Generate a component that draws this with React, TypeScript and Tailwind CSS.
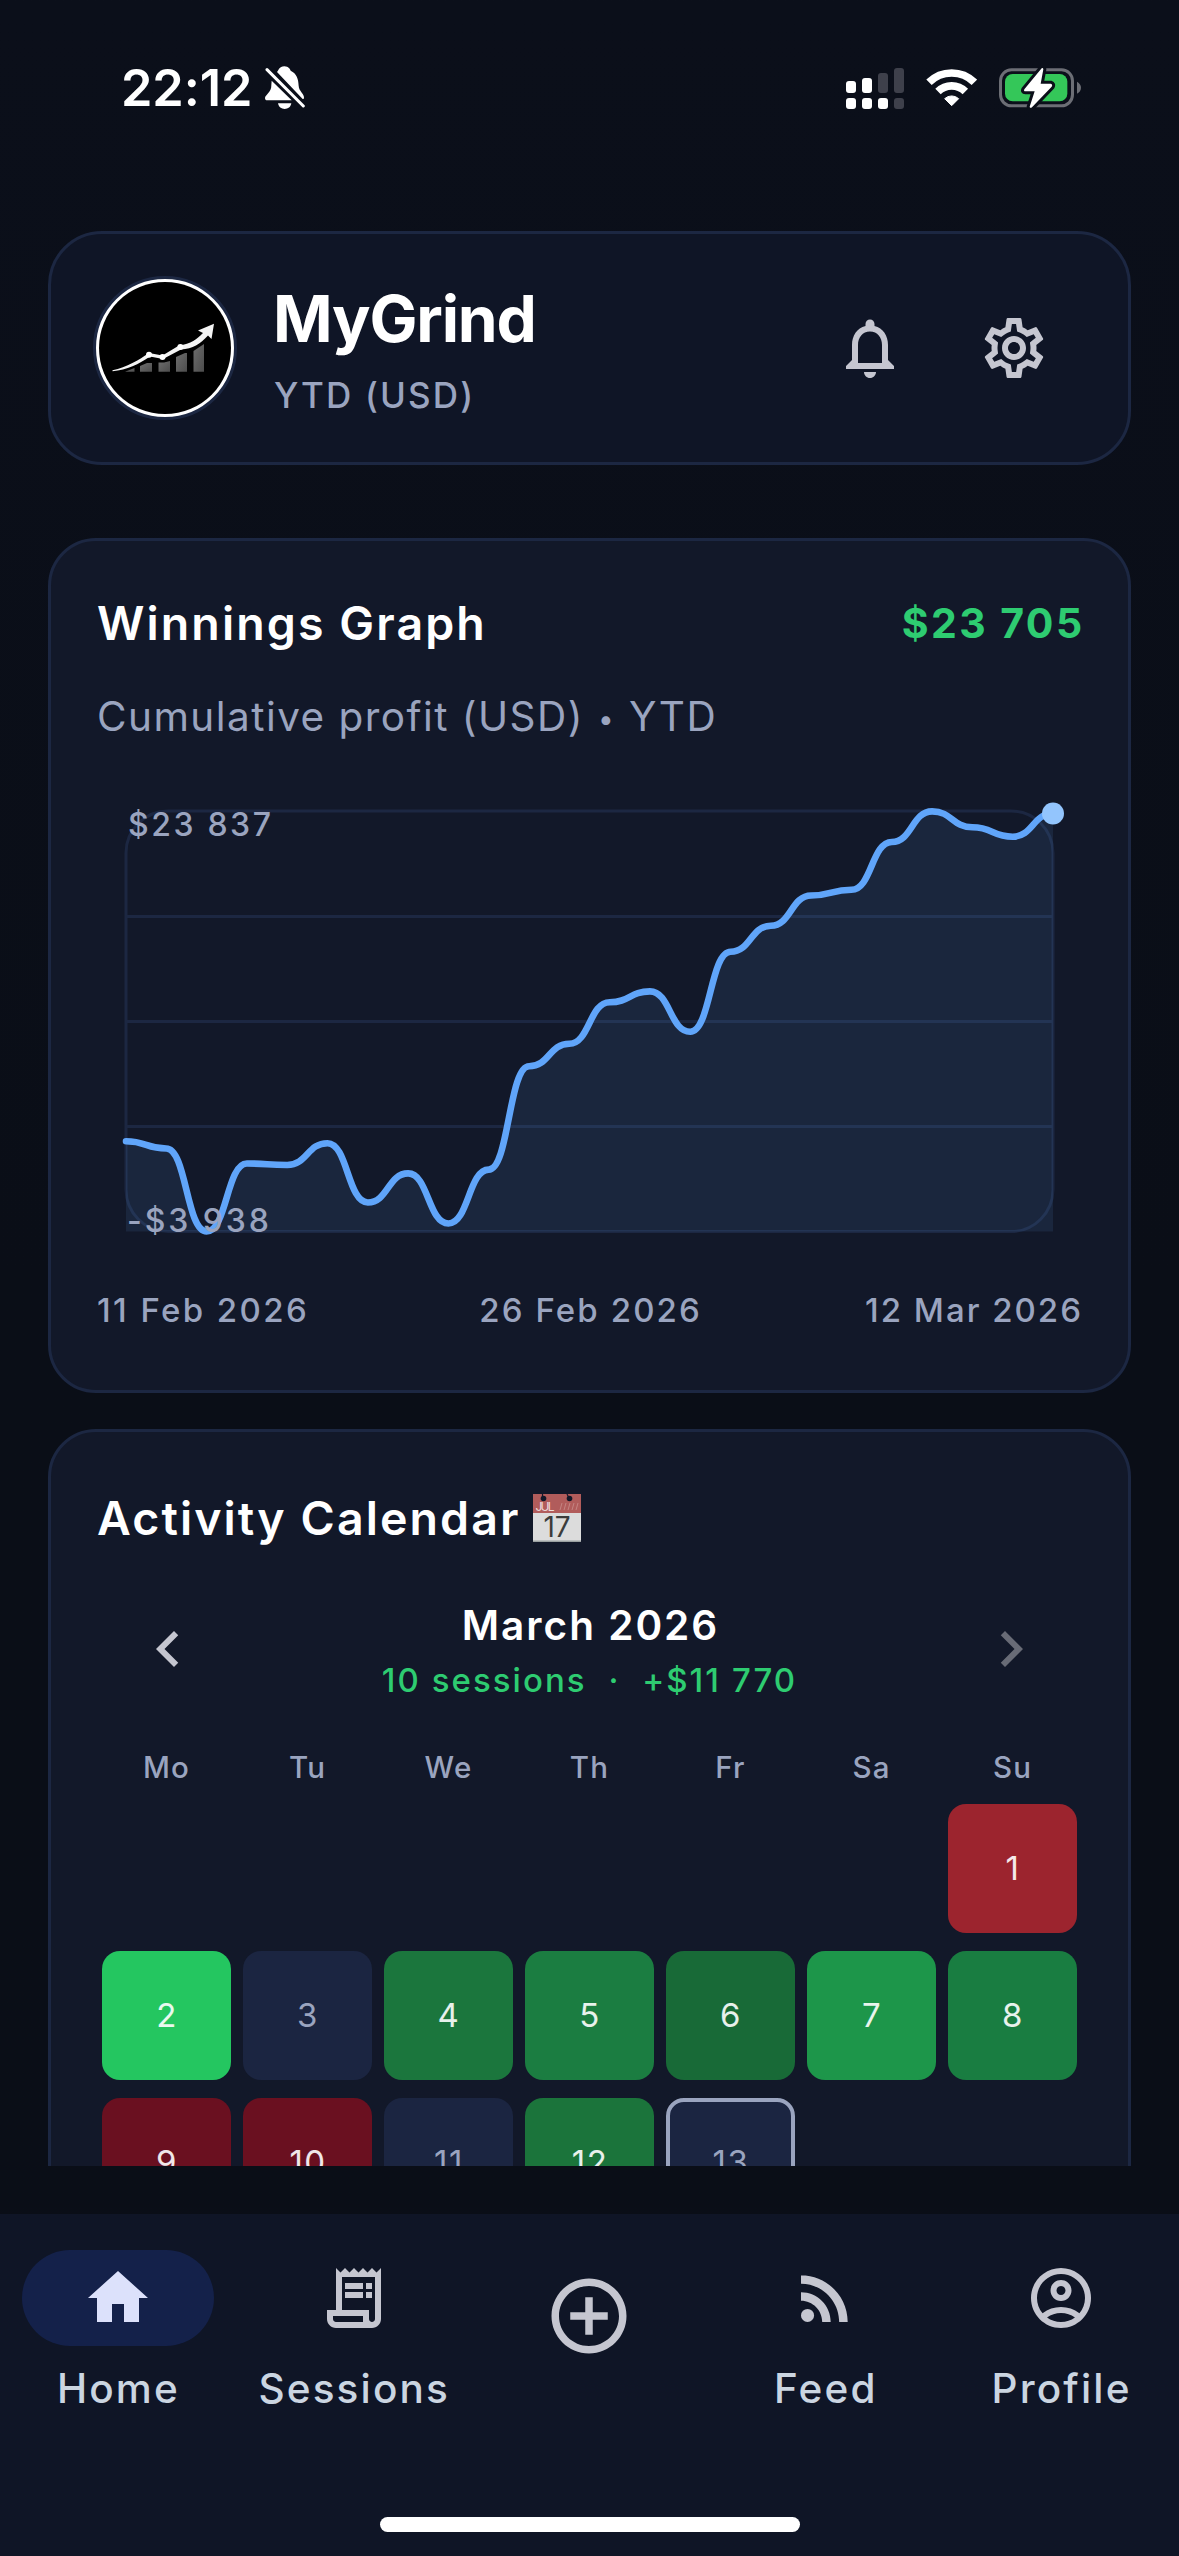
import type { ReactNode } from 'react'
import {
  MdAddCircleOutline,
  MdChevronLeft,
  MdChevronRight,
  MdHome,
  MdNotificationsNone,
  MdOutlineAccountCircle,
  MdOutlineReceiptLong,
  MdOutlineSettings,
  MdRssFeed,
} from 'react-icons/md'
import clsx from 'clsx'

// y positions of the cumulative profit, in chart pixels
const profitLine = [
  361.3, 368.5, 451.5, 383.5, 385, 363.2, 422.5, 393.4, 443.5, 389.6, 286.3, 263.7, 222.2, 211.4, 251.8, 171.8, 145.7,
  115.5, 109.8, 62, 31.4, 47.3, 56.7, 33.5,
]

const weekdays = ['Mo', 'Tu', 'We', 'Th', 'Fr', 'Sa', 'Su']

interface Day {
  day: number
  color: string
  idle?: boolean
  today?: boolean
}

const days: Day[] = [
  { day: 1, color: 'bg-[#9c242e] col-start-7' },
  { day: 2, color: 'bg-[#24c660]' },
  { day: 3, color: 'bg-[#1b2541]', idle: true },
  { day: 4, color: 'bg-[#1b763d]' },
  { day: 5, color: 'bg-[#1b7d41]' },
  { day: 6, color: 'bg-[#186a37]' },
  { day: 7, color: 'bg-[#1d964a]' },
  { day: 8, color: 'bg-[#197d41]' },
  { day: 9, color: 'bg-[#6a1020]' },
  { day: 10, color: 'bg-[#6a1020]' },
  { day: 11, color: 'bg-[#1b2541]', idle: true },
  { day: 12, color: 'bg-[#1b743b]' },
  { day: 13, color: 'bg-[#1b2541]', idle: true, today: true },
]

function StatusBar() {
  return (
    <div className="flex h-[176px] shrink-0 items-center justify-between pl-[121px] pr-[98px] text-white">
      <div className="flex items-center gap-[13px]">
        <span className="text-[50.5px] font-semibold leading-none tracking-[-0.1px]">22:12</span>
        <svg className="h-[43.3px] w-[40px]" viewBox="493 80 120 130" fill="currentColor">
          <path d="M529 98C534 94 535 81 551 81C564 81 568 90 570 94C588 103 593 118 594 139C595 156 610 162 610 174C610 178 609 180 606 179Z" />
          <path d="M513 124L573 183H500C495 183 493 180 493 176C493 166 513 160 512 137Z" />
          <path d="M499 91L608 200" stroke="currentColor" strokeWidth="9" strokeLinecap="round" />
          <path d="M532 192H572C570 203 562 209 552 209S534 203 532 192Z" />
        </svg>
      </div>
      <div className="flex items-center gap-[22px]">
        <svg className="h-[41px] w-[58px]" viewBox="0 0 58 41" fill="currentColor">
          <rect x="0" y="13" width="10" height="12" rx="3" />
          <rect x="16" y="10" width="10" height="15" rx="3" />
          <rect x="32" y="5" width="10" height="20" rx="3" fill="#3e404b" />
          <rect x="48" y="0" width="10" height="25" rx="3" fill="#3e404b" />
          <rect x="0" y="30" width="10" height="11" rx="3" />
          <rect x="16" y="30" width="10" height="11" rx="3" />
          <rect x="32" y="30" width="10" height="11" rx="3" />
          <rect x="48" y="30" width="10" height="11" rx="3" fill="#3e404b" />
        </svg>
        <svg className="h-[38px] w-[51px]" viewBox="318 86 153 114" fill="none" stroke="currentColor" strokeWidth="23">
          <path d="M327 126A96.6 96.6 0 0 1 463 126" />
          <path d="M354 153.600A58 58 0 0 1 436 153.600" />
          <path d="M395 196L374 175A31 31 0 0 1 416 175Z" fill="currentColor" strokeWidth="3" strokeLinejoin="round" />
        </svg>
        <svg className="h-[42px] w-[82px]" viewBox="537 80 246 126">
          <rect x="541.5" y="88.5" width="216" height="108" rx="33" fill="none" stroke="#6c6e75" strokeWidth="9" />
          <path d="M771 124C779 128 783 135 783 142.500S779 157 771 160Z" fill="#6c6e75" />
          <rect x="555" y="101" width="187" height="82" rx="23" fill="#34c759" />
          <path
            d="M665 84L613 147Q610 153 616 153H644L629 199Q630 205 636 201L695 139Q699 132 692 130H662L670 87Q669 81 665 84Z"
            fill="#fff"
            stroke="#0b0f19"
            strokeWidth="18"
            strokeLinejoin="round"
            paintOrder="stroke"
          />
        </svg>
      </div>
    </div>
  )
}

function Avatar() {
  return (
    <div className="size-[144px] shrink-0 rounded-full border-[3px] border-[#1c2742] bg-white p-[3px]">
      <div className="flex size-full items-center justify-center rounded-full bg-black">
        <svg className="size-[132px]" viewBox="6 6 132 132">
          <defs>
            <linearGradient id="bars" x1="0" y1="0" x2="1" y2="1">
              <stop offset="0" stopColor="#6e6e6e" />
              <stop offset="1" stopColor="#4c4c4c" />
            </linearGradient>
          </defs>
          <g fill="url(#bars)">
            <path d="M32 95.700L41.500 92V95.700Z" />
            <path d="M47 95.700V90L54 87H59V95.700Z" />
            <path d="M65.500 95.700V86.500H71L77 85V95.700Z" />
            <path d="M83 95.700V81L92 77H94V95.700Z" />
            <path d="M100.500 95.700V75L111 68V95.700Z" />
          </g>
          <path
            d="M19.500 94.300C34 91 46 84 56 77L69.500 79.500L86 69.500C98 68 104 63 110 57L105 54.500L121 47.700L118.500 63L115 59.500C107 68 100 73 88 73.500L70 83L57 80.500C46 88 34 94 19.500 95.300Z"
            fill="#f4f4f4"
          />
          <circle cx="56" cy="78.700" r="3" fill="#fff" />
          <circle cx="69.500" cy="80.900" r="3" fill="#fff" />
          <circle cx="87.400" cy="71" r="3" fill="#fff" />
        </svg>
      </div>
    </div>
  )
}

function Header() {
  return (
    <header className="mx-[48px] mt-[55px] flex h-[234px] shrink-0 items-center rounded-[54px] border-[3px] border-[#1c2742] bg-[#0f1526] px-[42px]">
      <Avatar />
      <div className="flex flex-col gap-[7px] pl-[36px] pt-[2px]">
        <h1 className="text-[64px] font-bold leading-[84px] tracking-[-1.18px] text-white">MyGrind</h1>
        <p className="pl-px text-[35px] font-medium leading-[54px] tracking-[2.15px] text-[#9aa4bf]">YTD (USD)</p>
      </div>
      <div className="ml-auto flex text-[72px] text-[#c5c6d0]">
        <button className="flex size-[144px] items-center justify-center">
          <MdNotificationsNone />
        </button>
        <button className="flex size-[144px] items-center justify-center">
          <MdOutlineSettings />
        </button>
      </div>
    </header>
  )
}

function Card({ className, children }: { className?: string; children: ReactNode }) {
  return (
    <section
      className={clsx(
        'mx-[48px] flex shrink-0 flex-col rounded-[48px] border-[3px] border-[#1c2742] bg-[#121829] px-[45px]',
        className,
      )}
    >
      {children}
    </section>
  )
}

function ProfitChart() {
  const step = 927 / (profitLine.length - 1)
  const x = (i: number) => 30 + i * step
  const line = profitLine.reduce((path, y, i) => {
    if (i === 0) return `M${x(0)} ${y}`
    const mid = x(i) - step / 2
    return `${path} C${mid} ${profitLine[i - 1]} ${mid} ${y} ${x(i)} ${y}`
  }, '')

  return (
    <div className="relative mt-[33px] h-[482px] shrink-0 text-[32px] font-medium leading-[48px] text-[#9aa4bf]">
      <svg className="size-full" viewBox="0 0 987 482" fill="none">
        <g stroke="#1c2742" strokeWidth="3">
          <rect x="30" y="31" width="927" height="420.500" rx="42" />
          <path d="M30 136.500H957M30 241.500H957M30 346.500H957" />
        </g>
        <path d={`${line} V451.5 H30 Z`} fill="#60a5fa" fillOpacity="0.1" />
        <path d={line} stroke="#60a5fa" strokeWidth="6.600" strokeLinecap="round" />
        <circle cx="957" cy="33.500" r="11" fill="#93c5fd" />
      </svg>
      <span className="absolute left-[32px] top-[21px] tracking-[2.6px]">$23 837</span>
      <span className="absolute left-[31px] top-[417px] tracking-[2.9px]">-$3 938</span>
    </div>
  )
}

function WinningsCard() {
  return (
    <Card className="mt-[73px] h-[855px] pt-[49px]">
      <div className="flex items-center justify-between pl-px">
        <h2 className="text-[46.5px] font-semibold leading-[66px] tracking-[2.1px] text-white">Winnings Graph</h2>
        <span className="mr-[-1.5px] text-[41px] font-bold leading-none tracking-[2.4px] text-[#2ecc71]">$23 705</span>
      </div>
      <p className="mt-[31px] flex h-[60px] items-center gap-[14px] pl-px text-[40.5px] tracking-[1.45px] text-[#9aa4bf]">
        <span>Cumulative profit (USD)</span>
        <span className="mt-[3px] text-[28px] leading-none">•</span>
        <span>YTD</span>
      </p>
      <ProfitChart />
      <div className="mt-[24px] flex justify-between pl-px text-[33px] font-medium leading-[48px] text-[#9aa4bf]">
        <span className="tracking-[2.4px]">11 Feb 2026</span>
        <span className="pl-[7px] tracking-[2.1px]">26 Feb 2026</span>
        <span className="tracking-[2px]">12 Mar 2026</span>
      </div>
    </Card>
  )
}

function CalendarEmoji() {
  return (
    <svg className="size-[48px]" viewBox="0 0 48 48">
      <rect width="48" height="48" fill="#dcdcdc" />
      <rect width="48" height="19" fill="#b15c5b" />
      <rect y="46.500" width="48" height="1.500" fill="#9aa0a0" />
      <circle cx="10.500" cy="4.500" r="2.800" fill="#121829" />
      <circle cx="36.500" cy="4.500" r="2.800" fill="#121829" />
      <path d="M9.500 0V4M34 0L36 4" stroke="#121829" strokeWidth="1.200" />
      <path d="M27 16L29 9M31 16L33 9M35 16L37 9M39 16L41 9M43 16L45 9" stroke="#c58482" strokeWidth="1" />
      <text x="2.500" y="17" fontSize="12" textLength="19" fill="#efdcdb">
        JUL
      </text>
      <text x="24" y="43" fontSize="28" textAnchor="middle" fill="#3c3c3c">
        17
      </text>
    </svg>
  )
}

function DayCell({ day, color, idle, today }: Day) {
  return (
    <div
      className={clsx(
        'flex h-[129px] items-center justify-center rounded-[18px] pl-px text-[33px] tracking-[1.5px]',
        color,
        idle ? 'text-[#9aa4bf]' : 'text-white/90',
        today ? 'border-[4.5px] border-[#9aa4bf]' : 'pt-px',
      )}
    >
      {day}
    </div>
  )
}

function CalendarCard() {
  return (
    <Card className="mt-[36px] pb-[60px] pt-[53px]">
      <div className="flex items-center gap-[12px] pl-px">
        <h2 className="text-[46.5px] font-semibold leading-[66px] tracking-[2.09px] text-white">Activity Calendar</h2>
        <CalendarEmoji />
      </div>
      <div className="mt-[26px] flex items-center justify-between text-[72px] text-[#c5c6d0]">
        <button className="flex size-[144px] items-center justify-center">
          <MdChevronLeft />
        </button>
        <div className="flex flex-col items-center">
          <span className="pl-[2px] pt-px text-[40.5px] font-semibold leading-[60px] tracking-[2px] text-white">
            March 2026
          </span>
          <span className="whitespace-pre text-[33px] font-medium leading-[48px] tracking-[2.05px] text-[#2ecc71]">
            {'10 sessions  ·  +$11 770'}
          </span>
        </div>
        <button className="flex size-[144px] items-center justify-center text-[#686b76]">
          <MdChevronRight />
        </button>
      </div>
      <div className="mt-[25px] grid grid-cols-7 text-center text-[29.5px] font-medium leading-[43px] tracking-[1.2px] text-[#9aa4bf]">
        {weekdays.map((name) => (
          <span key={name}>{name}</span>
        ))}
      </div>
      <div className="mt-[15px] grid grid-cols-7 gap-x-[12px] gap-y-[18px] px-[6px]">
        {days.map((d) => (
          <DayCell key={d.day} {...d} />
        ))}
      </div>
    </Card>
  )
}

function NavItem({ icon, label, active }: { icon: ReactNode; label: string; active?: boolean }) {
  return (
    <button className="flex flex-1 flex-col items-center pt-[36px]">
      <span
        className={clsx(
          'flex h-[96px] w-[192px] items-center justify-center rounded-full text-[72px]',
          active ? 'bg-[#14214a] text-[#dce1fb]' : 'text-[#c5c6d0]',
        )}
      >
        {icon}
      </span>
      <span className="mt-[13px] pl-px text-[40.5px] font-medium leading-[60px] tracking-[2.15px] text-[#cbd5e1]">
        {label}
      </span>
    </button>
  )
}

function BottomNav() {
  return (
    <nav className="mt-[48px] flex h-[342px] shrink-0 flex-col items-center bg-[#0f1526]">
      <div className="flex w-full flex-1">
        <NavItem icon={<MdHome />} label="Home" active />
        <NavItem icon={<MdOutlineReceiptLong />} label="Sessions" />
        <button className="flex flex-1 justify-center pt-[57px] text-[90px] text-[#c5c6d0]">
          <MdAddCircleOutline />
        </button>
        <NavItem icon={<MdRssFeed />} label="Feed" />
        <NavItem icon={<MdOutlineAccountCircle />} label="Profile" />
      </div>
      <div className="mb-[24px] h-[15px] w-[420px] rounded-full bg-white" />
    </nav>
  )
}

export default function App() {
  return (
    <div className="flex h-[2556px] w-[1179px] flex-col overflow-hidden bg-linear-to-b from-[#0b0f1a] via-[#0a0e17] to-[#0a0e17] font-['Inter','Liberation_Sans',sans-serif]">
      <main className="flex h-[2166px] shrink-0 flex-col overflow-hidden">
        <StatusBar />
        <Header />
        <WinningsCard />
        <CalendarCard />
      </main>
      <BottomNav />
    </div>
  )
}
